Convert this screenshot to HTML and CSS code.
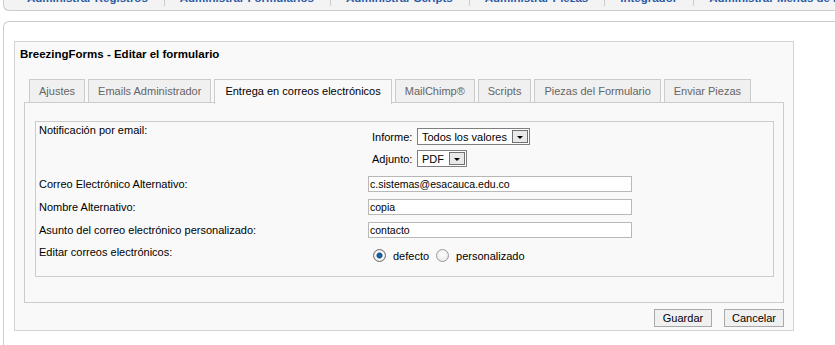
FILE: index.html
```html
<!DOCTYPE html>
<html>
    <head>
        <title>BreezingForms - Editar el formulario</title>
        <link rel="stylesheet" href="styles.css">
    </head>
    <body>
        <div class="topnav">
            <ul class="menu">
                <li><a href="#">Administrar Registros</a></li>
                <li><a href="#">Administrar Formularios</a></li>
                <li><a href="#">Administrar Scripts</a></li>
                <li><a href="#">Administrar Piezas</a></li>
                <li><a href="#">Integrador</a></li>
                <li><a href="#">Administrar Menús de BackEnd</a></li>
            </ul>
        </div>

        <div class="panel">
            <div class="box">
                <h2 class="title">BreezingForms - Editar el formulario</h2>

                <ul class="tabs">
                    <li>Ajustes</li>
                    <li>Emails Administrador</li>
                    <li class="active">Entrega en correos electrónicos</li>
                    <li>MailChimp®</li>
                    <li>Scripts</li>
                    <li>Piezas del Formulario</li>
                    <li>Enviar Piezas</li>
                </ul>

                <div class="pane">
                    <div class="fieldset">
                        <div class="row row-top">
                            <div class="label">Notificación por email:</div>
                            <div class="field selects">
                                <div class="selrow">
                                    <span class="sellabel">Informe:</span>
                                    <span class="select">Todos los valores<span class="arrow"></span></span>
                                </div>
                                <div class="selrow">
                                    <span class="sellabel">Adjunto:</span>
                                    <span class="select">PDF<span class="arrow"></span></span>
                                </div>
                            </div>
                        </div>
                        <div class="row">
                            <div class="label">Correo Electrónico Alternativo:</div>
                            <input class="text" type="text" value="c.sistemas@esacauca.edu.co">
                        </div>
                        <div class="row">
                            <div class="label">Nombre Alternativo:</div>
                            <input class="text" type="text" value="copia">
                        </div>
                        <div class="row">
                            <div class="label">Asunto del correo electrónico personalizado:</div>
                            <input class="text" type="text" value="contacto">
                        </div>
                        <div class="row row-top row-radio">
                            <div class="label">Editar correos electrónicos:</div>
                            <div class="field radios">
                                <span class="radio checked"></span><span class="rlabel">defecto</span>
                                <span class="radio"></span><span class="rlabel">personalizado</span>
                            </div>
                        </div>
                    </div>
                </div>

                <div class="actions">
                    <button type="button">Guardar</button>
                    <button type="button">Cancelar</button>
                </div>
            </div>
        </div>
    </body>
</html>
```

FILE: styles.css
```css
body {
    margin: 0;
    background: #fff;
    font-family: "Liberation Sans", Arial, sans-serif;
    font-size: 11px;
    color: #000;
    overflow: hidden;
}

/* top menu, only its bottom edge is visible */
.topnav {
    height: 10px;
    margin-left: 3px;
    background: #f3f3f3;
    border-left: 1px solid #ccc;
    border-bottom: 1px solid #ccc;
    border-bottom-left-radius: 6px;
    overflow: hidden;
    white-space: nowrap;
}

.menu {
    display: flex;
    margin: -9px 0 0 0;
    padding: 0 0 0 23px;
    list-style: none;
}

.menu li {
    padding: 0 16px 0 0;
    margin-right: 15px;
    border-right: 1px solid #ccc;
    height: 15px;
    line-height: 14px;
}

.menu a {
    color: #2b5aa6;
    font-size: 11.5px;
    font-weight: bold;
    text-decoration: none;
}

.panel {
    margin: 10px 0 0 3px;
    padding: 19px 0 0 10px;
    border-top: 1px solid #ccc;
    border-left: 1px solid #ccc;
    border-top-left-radius: 6px;
    height: 320px;
}

.box {
    width: 760px;
    padding: 5px 9px 3px 9px;
    background: #f9f9f9;
    border: 1px solid #d4d4d4;
}

.title {
    margin: 0 0 18px -4px;
    font-size: 11.5px;
    line-height: 14px;
    font-weight: bold;
}

.tabs {
    display: flex;
    gap: 3px;
    margin: 0;
    padding: 0 0 0 5px;
    list-style: none;
    height: 23px;
}

.tabs li {
    height: 22px;
    line-height: 22px;
    padding: 0 9px;
    background: #f0f0f0;
    border: 1px solid #ccc;
    border-bottom: none;
    color: #666;
    white-space: nowrap;
}

.tabs li.active {
    height: 24px;
    background: #f9f9f9;
    color: #000;
    position: relative;
    z-index: 1;
    padding: 0 10px;
}

.pane {
    border: 1px solid #ccc;
    padding: 18px 9px 25px 10px;
}

.fieldset {
    border: 1px solid #ccc;
    padding: 1px 0 14px 3px;
}

.row {
    display: flex;
    align-items: center;
    margin-bottom: 7px;
}

.row-top {
    align-items: flex-start;
    margin-bottom: 9px;
}

.row-radio {
    margin-bottom: 0;
}

.label {
    width: 329px;
    line-height: 14px;
    flex: none;
}

.selects {
    padding-top: 5px;
}

.selrow {
    display: flex;
    align-items: center;
    height: 17px;
    margin-bottom: 5px;
}

.selrow:last-child {
    margin-bottom: 0;
}

.sellabel {
    width: 45px;
    padding-left: 4px;
}

.select {
    display: inline-flex;
    align-items: center;
    height: 15px;
    padding: 0 1px 0 4px;
    background: #fff;
    border: 1px solid #7f7f7f;
}

.arrow {
    width: 14px;
    height: 11px;
    margin-left: 5px;
    background: #e9e9e9;
    border: 1px solid #707070;
    position: relative;
}

.arrow::after {
    content: "";
    position: absolute;
    left: 4px;
    top: 5px;
    border-left: 3px solid transparent;
    border-right: 3px solid transparent;
    border-top: 3px solid #000;
}

.text {
    width: 264px;
    height: 16px;
    margin: 0;
    padding: 0 1px;
    box-sizing: border-box;
    border: 1px solid #b8b8b8;
    background: #fff;
    font-family: "Liberation Sans", Arial, sans-serif;
    font-size: 10.5px;
    color: #000;
}

.radios {
    display: flex;
    align-items: center;
    padding: 4px 0 0 5px;
}

.radio {
    width: 11px;
    height: 11px;
    border-radius: 50%;
    border: 1px solid #9a9a9a;
    background: radial-gradient(circle at 50% 40%, #fff 0, #e4e4e4 90%);
    box-sizing: content-box;
}

.radio.checked {
    border-color: #6d6d6d;
    background: radial-gradient(circle, #0d6fb8 0, #1c4f86 2.5px, #fff 3.5px, #dcdcdc 6px);
}

.rlabel {
    margin: 0 7px 0 7px;
}

.actions {
    display: flex;
    justify-content: flex-end;
    gap: 12px;
    margin-top: 6px;
}

button {
    width: 60px;
    height: 18px;
    padding: 0;
    background: #f0f0f0;
    border: 1px solid #aaa;
    font-family: "Liberation Sans", Arial, sans-serif;
    font-size: 11px;
    color: #000;
}

button:first-child {
    width: 58px;
}
```
